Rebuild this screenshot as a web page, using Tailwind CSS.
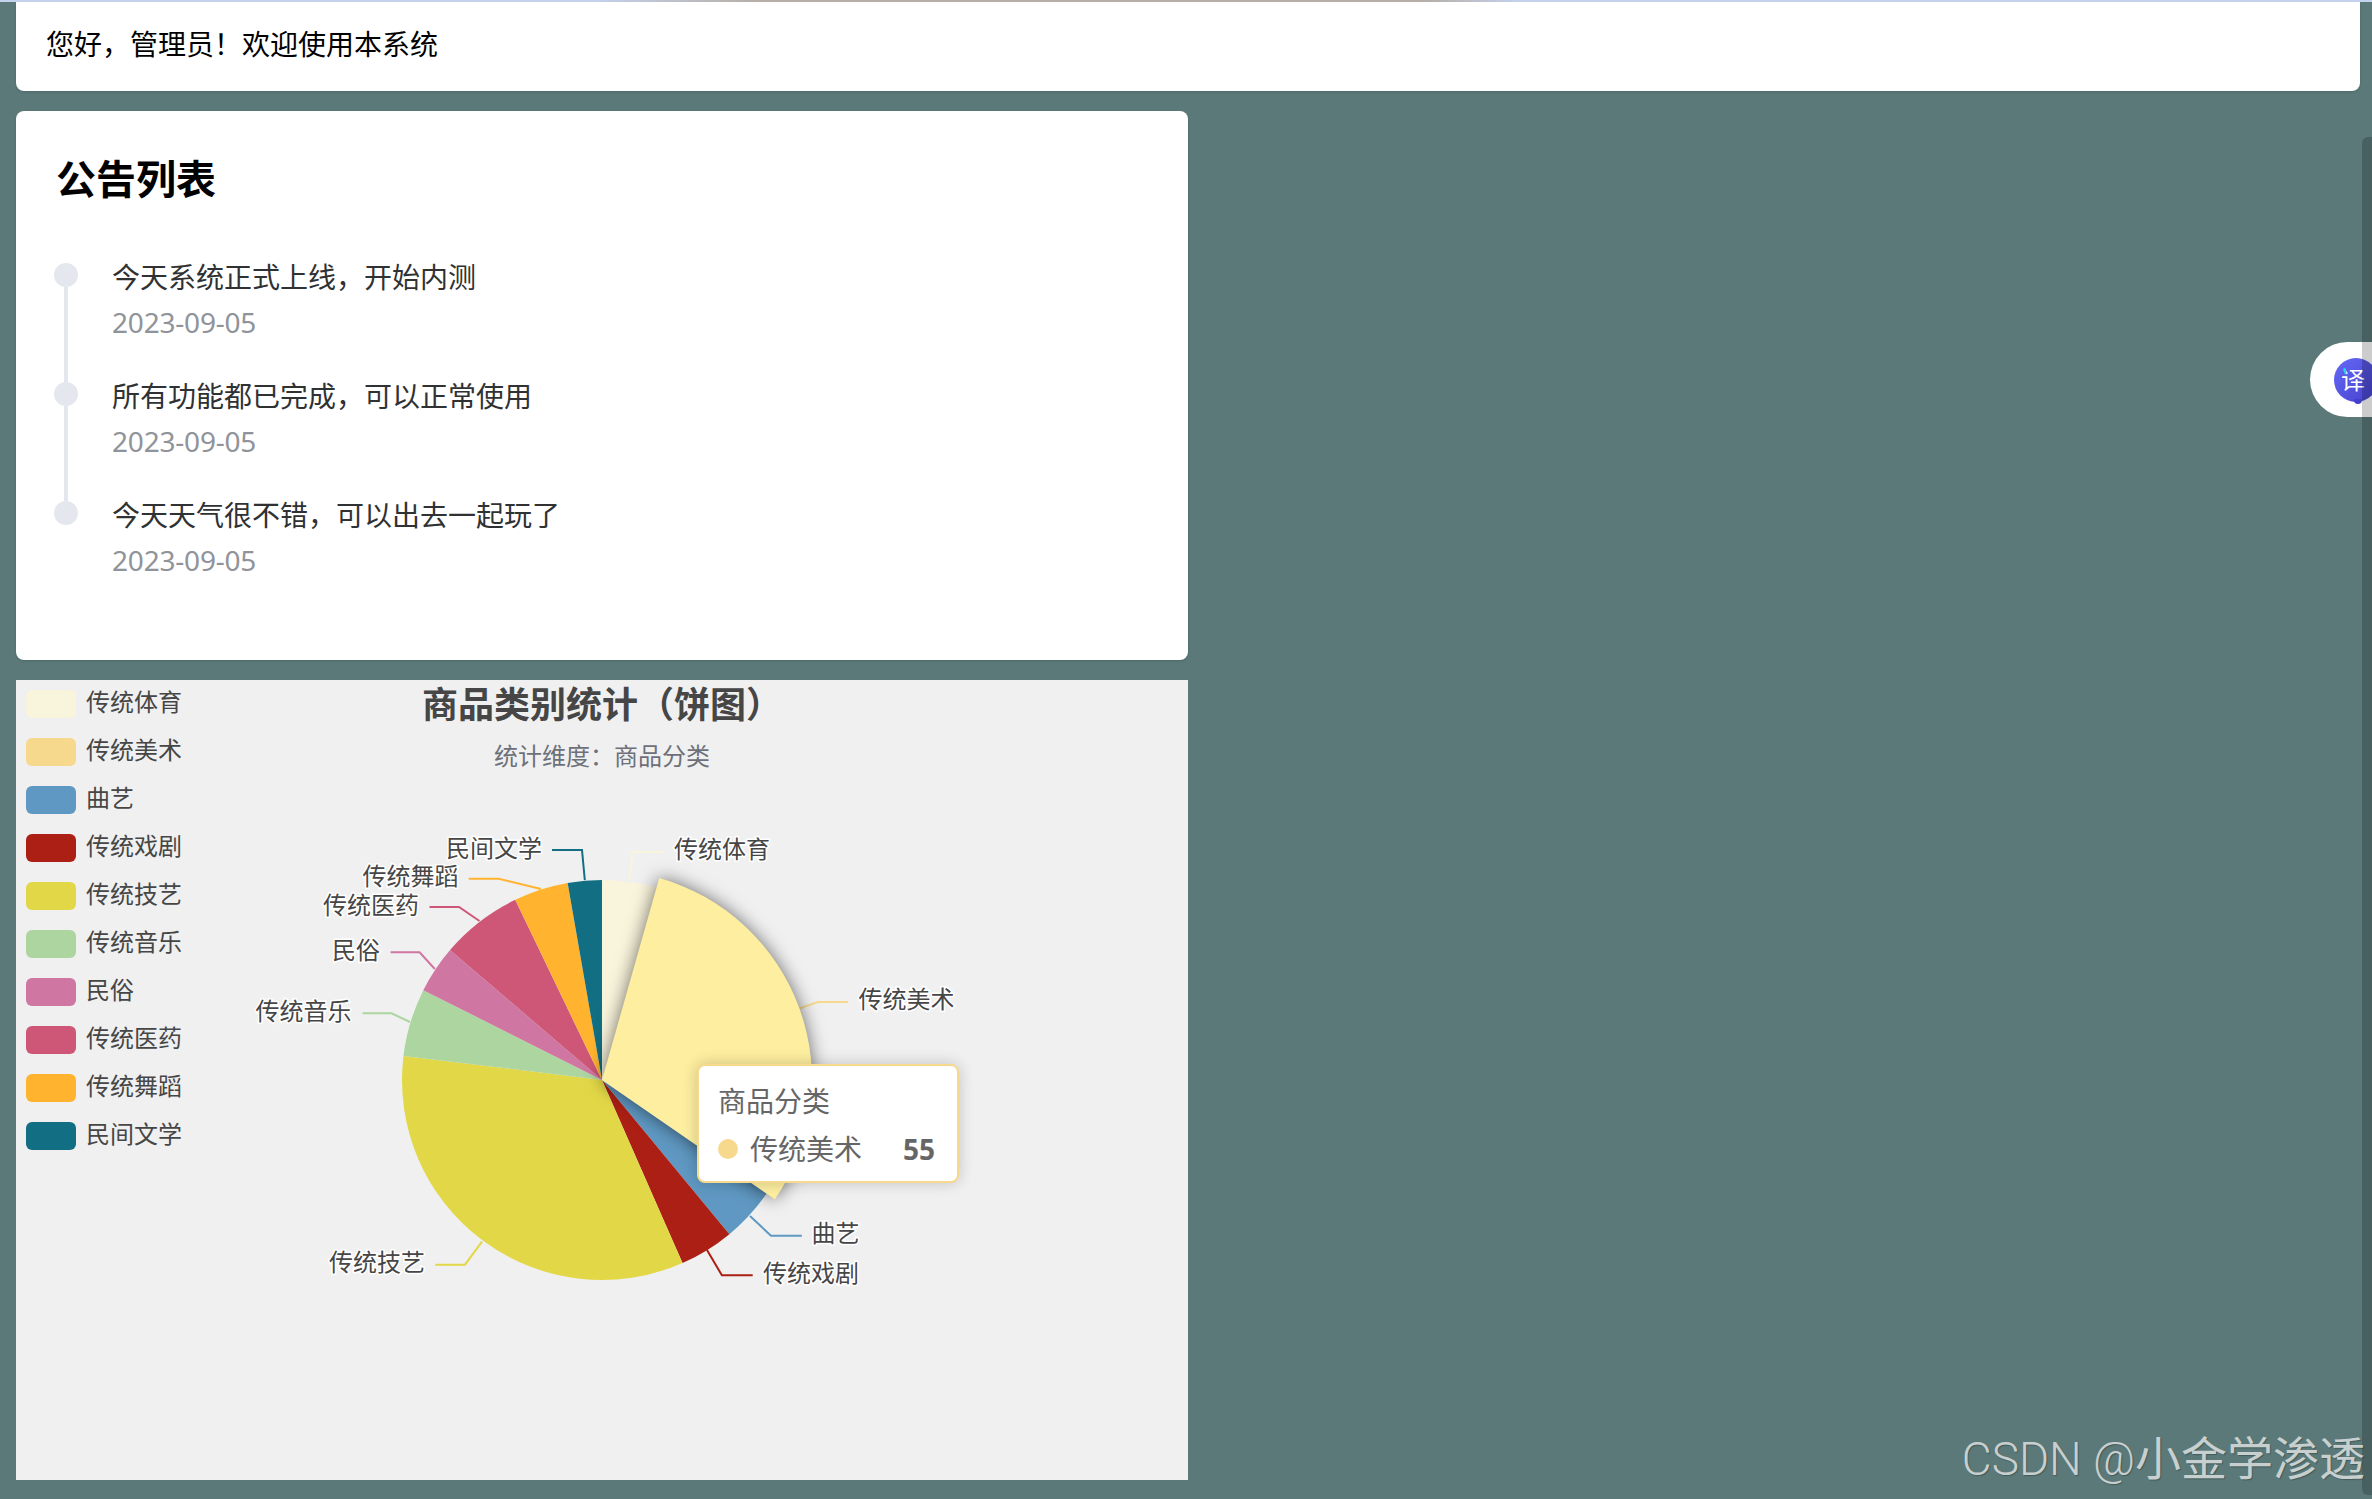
<!DOCTYPE html>
<html lang="zh">
<head>
<meta charset="UTF-8">
<meta name="viewport" content="width=device-width, initial-scale=1.0">
<title>首页</title>
<script src="https://cdn.jsdelivr.net/npm/@tailwindcss/browser@4"></script>
</head>
<body class="relative h-[1499px] overflow-hidden bg-[#5a7978] font-['Noto_Sans','Noto_Sans_CJK_SC',sans-serif]">
  <div class="h-[2px] bg-[linear-gradient(90deg,#c5d3ee_25%,#b8b0a8_32%,#b8b0a8_60%,#c5d3ee_64%)]"></div>

  <main class="pl-4 pr-3">
    <!-- greeting -->
    <div class="flex h-[89px] items-center rounded-b-lg bg-white pb-[6px] pl-[30px] text-[28px] text-black shadow-sm">您好，管理员！欢迎使用本系统</div>

    <div class="mt-5 w-1/2">
      <!-- notices -->
      <section class="h-[549px] rounded-lg bg-white pl-10 pt-[42px] shadow-sm">
        <h2 class="text-[40px] leading-[52px] font-bold text-black">公告列表</h2>
        <ul class="mt-[58px] -ml-[2px]">
          <li class="flex h-[119px] gap-[34px]">
            <div class="flex w-6 flex-col items-center">
              <span class="h-6 w-6 shrink-0 rounded-full bg-[#e4e7ed]"></span>
              <span class="w-1 flex-1 bg-[#e4e7ed]"></span>
            </div>
            <div class="-mt-px">
              <p class="text-[28px] leading-[30px] text-[#303133]">今天系统正式上线，开始内测</p>
              <p class="mt-[15px] text-[28px] leading-[30px] tracking-[-0.2px] text-[#909399]">2023-09-05</p>
            </div>
          </li>
          <li class="flex h-[119px] gap-[34px]">
            <div class="flex w-6 flex-col items-center">
              <span class="h-6 w-6 shrink-0 rounded-full bg-[#e4e7ed]"></span>
              <span class="w-1 flex-1 bg-[#e4e7ed]"></span>
            </div>
            <div class="-mt-px">
              <p class="text-[28px] leading-[30px] text-[#303133]">所有功能都已完成，可以正常使用</p>
              <p class="mt-[15px] text-[28px] leading-[30px] tracking-[-0.2px] text-[#909399]">2023-09-05</p>
            </div>
          </li>
          <li class="flex h-[119px] gap-[34px]">
            <div class="flex w-6 flex-col items-center">
              <span class="h-6 w-6 shrink-0 rounded-full bg-[#e4e7ed]"></span>
            </div>
            <div class="-mt-px">
              <p class="text-[28px] leading-[30px] text-[#303133]">今天天气很不错，可以出去一起玩了</p>
              <p class="mt-[15px] text-[28px] leading-[30px] tracking-[-0.2px] text-[#909399]">2023-09-05</p>
            </div>
          </li>
        </ul>
      </section>

      <!-- pie chart -->
      <section class="relative mt-5 h-[800px] bg-[#f0f0f0]">
        <div class="pt-[2px] text-center">
          <h3 class="text-[36px] leading-[46px] font-bold text-[#464646]">商品类别统计（饼图）</h3>
          <p class="mt-3 text-[24px] leading-[32px] text-[#6e7079]">统计维度：商品分类</p>
        </div>

        <ul class="absolute left-[10px] top-[10px] flex flex-col gap-5 text-[24px] leading-7 text-[#464646]">
          <li class="flex items-center gap-[10px]"><span class="h-7 w-[50px] rounded-md bg-[#f9f4dc]"></span><span class="-mt-1">传统体育</span></li>
          <li class="flex items-center gap-[10px]"><span class="h-7 w-[50px] rounded-md bg-[#f7d98e]"></span><span class="-mt-1">传统美术</span></li>
          <li class="flex items-center gap-[10px]"><span class="h-7 w-[50px] rounded-md bg-[#5f98c2]"></span><span class="-mt-1">曲艺</span></li>
          <li class="flex items-center gap-[10px]"><span class="h-7 w-[50px] rounded-md bg-[#ab1f14]"></span><span class="-mt-1">传统戏剧</span></li>
          <li class="flex items-center gap-[10px]"><span class="h-7 w-[50px] rounded-md bg-[#e2d847]"></span><span class="-mt-1">传统技艺</span></li>
          <li class="flex items-center gap-[10px]"><span class="h-7 w-[50px] rounded-md bg-[#add5a0]"></span><span class="-mt-1">传统音乐</span></li>
          <li class="flex items-center gap-[10px]"><span class="h-7 w-[50px] rounded-md bg-[#d076a2]"></span><span class="-mt-1">民俗</span></li>
          <li class="flex items-center gap-[10px]"><span class="h-7 w-[50px] rounded-md bg-[#ce5777]"></span><span class="-mt-1">传统医药</span></li>
          <li class="flex items-center gap-[10px]"><span class="h-7 w-[50px] rounded-md bg-[#ffb32e]"></span><span class="-mt-1">传统舞蹈</span></li>
          <li class="flex items-center gap-[10px]"><span class="h-7 w-[50px] rounded-md bg-[#126e82]"></span><span class="-mt-1">民间文学</span></li>
        </ul>

        <svg class="absolute inset-0" width="1172" height="800" viewBox="0 0 1172 800">
          <!-- label lines -->
          <g fill="none" stroke-width="2">
            <polyline stroke="#f9f4dc" points="613.5,200 616.6,172 647.8,172"/>
            <polyline stroke="#f7d98e" points="784,328.3 801.9,322 832.2,322"/>
            <polyline stroke="#5f98c2" points="734,536 755,555.7 785.8,555.7"/>
            <polyline stroke="#ab1f14" points="691,570 705.9,595.3 736.7,595.3"/>
            <polyline stroke="#e2d847" points="466,561.7 449,584.7 419.3,584.7"/>
            <polyline stroke="#add5a0" points="394,342 375.5,333.3 346.5,333.3"/>
            <polyline stroke="#d076a2" points="418.8,289 403.6,272.3 374.6,272.3"/>
            <polyline stroke="#ce5777" points="463.5,241 443,227 413.5,227"/>
            <polyline stroke="#ffb32e" points="525,209 482.7,198.7 452.75,198.7"/>
            <polyline stroke="#126e82" points="568.8,200 566,170 536,170"/>
          </g>

          <!-- slices, 182 in total, clockwise from 12 o'clock -->
          <path fill="#f9f4dc" d="M586 400 L586 200 A200 200 0 0 1 640.54 207.58 Z"/>
          <path fill="#5f98c2" d="M586 400 L750.6 513.61 A200 200 0 0 1 713.38 554.19 Z"/>
          <path fill="#ab1f14" d="M586 400 L713.38 554.19 A200 200 0 0 1 666.5 583.08 Z"/>
          <path fill="#e2d847" d="M586 400 L666.5 583.08 A200 200 0 0 1 387.46 375.89 Z"/>
          <path fill="#add5a0" d="M586 400 L387.46 375.89 A200 200 0 0 1 407.33 310.13 Z"/>
          <path fill="#d076a2" d="M586 400 L407.33 310.13 A200 200 0 0 1 434.05 269.96 Z"/>
          <path fill="#ce5777" d="M586 400 L434.05 269.96 A200 200 0 0 1 499.22 219.81 Z"/>
          <path fill="#ffb32e" d="M586 400 L499.22 219.81 A200 200 0 0 1 551.65 202.97 Z"/>
          <path fill="#126e82" d="M586 400 L551.65 202.97 A200 200 0 0 1 586 200 Z"/>
          <!-- hovered slice sits on top with its shadow -->
          <path class="drop-shadow-[0_0_9px_rgba(0,0,0,0.55)]" fill="#feeea0" d="M586 400 L643.26 197.96 A210 210 0 0 1 758.83 519.29 Z"/>

          <!-- slice labels -->
          <g class="[paint-order:stroke]" font-size="24" fill="#464646" stroke="#ffffff" stroke-width="3" dominant-baseline="central">
            <text x="658" y="168.5">传统体育</text>
            <text x="842.5" y="318.5">传统美术</text>
            <text x="795.5" y="552.5">曲艺</text>
            <text x="747" y="592">传统戏剧</text>
            <text x="409" y="581.5" text-anchor="end">传统技艺</text>
            <text x="335.5" y="330.5" text-anchor="end">传统音乐</text>
            <text x="364" y="269.5" text-anchor="end">民俗</text>
            <text x="403" y="224.5" text-anchor="end">传统医药</text>
            <text x="442.5" y="195.5" text-anchor="end">传统舞蹈</text>
            <text x="526" y="167" text-anchor="end">民间文学</text>
          </g>
        </svg>

        <!-- tooltip -->
        <div class="absolute left-[681px] top-[384px] h-[119px] w-[262px] rounded-lg border-2 border-[#f7d98e] bg-white pl-[19px] pt-4 text-[28px] leading-[38px] text-[#666666] shadow-[0_0_15px_rgba(0,0,0,0.2)]">
          <div>商品分类</div>
          <div class="mt-[10px] flex items-center">
            <span class="h-5 w-5 rounded-full bg-[#f7d98e]"></span>
            <span class="ml-3">传统美术</span>
            <span class="ml-[41px] font-bold">55</span>
          </div>
        </div>
      </section>
    </div>
  </main>

  <!-- translate plugin button -->
  <div class="absolute right-0 top-[342px] flex h-[75px] w-[62px] items-center rounded-l-full bg-white pl-6">
    <div class="relative flex h-11 w-11 shrink-0 items-center justify-center rounded-full bg-gradient-to-br from-[#6568f7] to-[#4540cc] pr-[6px] text-[24px] leading-none text-white">译
      <span class="absolute left-[10px] top-[10px] h-[6px] w-[2px] -rotate-12 bg-[#22d3ee]"></span>
      <span class="absolute -bottom-[2px] left-5 h-[5px] w-2 rounded-b-sm bg-[#4540cc]"></span>
    </div>
  </div>

  <!-- scrollbar -->
  <div class="absolute bottom-1 right-0 top-[137px] w-[10px] rounded-l-md bg-black/20"></div>

  <!-- watermark -->
  <div class="absolute bottom-3 right-[7px] whitespace-nowrap text-[46px] leading-[56px] text-[#c8cfcf] [text-shadow:1px_1px_1px_rgba(0,0,0,0.25)]"><span class="font-['Roboto'] text-[46px] font-light">CSDN @</span><span>小金学渗透</span></div>
</body>
</html>
